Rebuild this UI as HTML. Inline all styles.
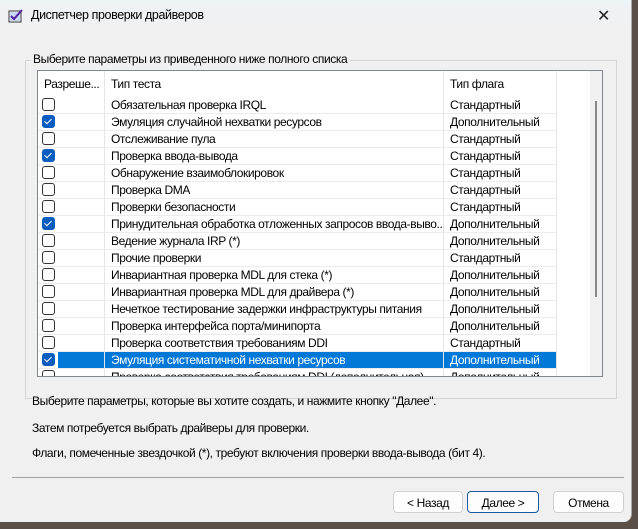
<!DOCTYPE html>
<html><head><meta charset="utf-8"><style>
body{margin:0;width:638px;height:529px;background:#5a5048;position:relative;overflow:hidden;font-family:"Liberation Sans",sans-serif;font-size:12px;letter-spacing:-0.4px;color:#000}
.win{position:absolute;left:0;top:0;width:631px;height:522px;background:#f0f0f0;border-radius:0 0 8px 0;border-right:1px solid #aaa}
.title{position:absolute;left:0;top:0;width:631px;height:32px;background:linear-gradient(#eef3f7,#f0f0f0)}
.title .tt{position:absolute;left:31px;top:8px;font-size:12.5px}
.title .close{position:absolute;left:597px;top:6px;font-size:16px;color:#222;letter-spacing:0}
.grp{position:absolute;left:25px;top:60px;width:590px;height:337px;border:1px solid #d5d5d5}
.grpl{position:absolute;left:31px;top:52px;background:#f0f0f0;padding:0 2px}
.list{position:absolute;left:37px;top:70px;width:564px;height:305px;border:1px solid #828790;background:#fff;overflow:hidden}
.hdr{position:absolute;top:0;height:26px;line-height:26px;padding-left:6px;border-right:1px solid #e5e5e5;box-sizing:border-box}
.row{position:absolute;left:0;width:519px;height:17px;border-bottom:1px solid #ececec;box-sizing:border-box}
.row div{position:absolute;top:0;height:16px;line-height:16px;border-right:1px solid #e5e5e5;box-sizing:border-box;white-space:nowrap;overflow:hidden}
.cb{position:absolute;left:4px;top:1px;width:13px;height:13px;border:1px solid #333;border-radius:3px;box-sizing:border-box;background:#fff}
.cb.on{background:#0a5cbf;border-color:#0a5cbf}
.cb.on:after{content:"";position:absolute;left:3px;top:1px;width:3px;height:6px;border:solid #fff;border-width:0 1px 1px 0;transform:rotate(45deg)}
.sel .t{background:#0078d7;color:#fff}
.sb{position:absolute;left:552px;top:0;width:12px;height:305px;background:#f0f0f0}
.thumb{position:absolute;left:5px;top:30px;width:2px;height:196px;background:#888}
.txt{position:absolute;left:32px}
.btn{position:absolute;top:491px;height:22px;border:1px solid #d0d0d0;border-radius:4px;background:#fdfdfd;text-align:center;line-height:22px;box-sizing:border-box}
</style></head><body>
<div class="win">
<div class="title">
<svg style="position:absolute;left:8px;top:9px" width="16" height="14" viewBox="0 0 16 14"><rect x="1" y="2" width="12" height="11" fill="#fff" stroke="#333"/><rect x="2" y="3" width="10" height="9" fill="#c9d8f0"/><path d="M3 7l3 3 8-9" stroke="#5020a0" stroke-width="2" fill="none"/></svg>
<span class="tt">Диспетчер проверки драйверов</span><span class="close">✕</span></div>
<div class="grp"></div>
<div class="grpl">Выберите параметры из приведенного ниже полного списка</div>
<div class="list">
<div class="hdr" style="left:0;width:67px">Разреше...</div>
<div class="hdr" style="left:67px;width:339px">Тип теста</div>
<div class="hdr" style="left:406px;width:113px">Тип флага</div>
<div class="hdr" style="left:519px;width:33px;border:0"></div>
<div id="rows"></div>
<div class="sb"><div class="thumb"></div></div>
</div>
<div class="txt" style="top:394px">Выберите параметры, которые вы хотите создать, и нажмите кнопку "Далее".</div>
<div class="txt" style="top:421px">Затем потребуется выбрать драйверы для проверки.</div>
<div class="txt" style="top:446px">Флаги, помеченные звездочкой (*), требуют включения проверки ввода-вывода (бит 4).</div>
<div style="position:absolute;left:12px;top:477px;width:612px;height:1px;background:#a0a0a0"></div>
<div class="btn" style="left:393px;width:70px">&lt; Назад</div>
<div class="btn" style="left:467px;width:72px;border-color:#1a5aa0">Далее &gt;</div>
<div class="btn" style="left:553px;width:71px">Отмена</div>
</div>
<script>
var d=[[0,"Обязательная проверка IRQL","Стандартный"],[1,"Эмуляция случайной нехватки ресурсов","Дополнительный"],[0,"Отслеживание пула","Стандартный"],[1,"Проверка ввода-вывода","Стандартный"],[0,"Обнаружение взаимоблокировок","Стандартный"],[0,"Проверка DMA","Стандартный"],[0,"Проверки безопасности","Стандартный"],[1,"Принудительная обработка отложенных запросов ввода-выво...","Дополнительный"],[0,"Ведение журнала IRP (*)","Дополнительный"],[0,"Прочие проверки","Стандартный"],[0,"Инвариантная проверка MDL для стека (*)","Дополнительный"],[0,"Инвариантная проверка MDL для драйвера (*)","Дополнительный"],[0,"Нечеткое тестирование задержки инфраструктуры питания","Дополнительный"],[0,"Проверка интерфейса порта/минипорта","Дополнительный"],[0,"Проверка соответствия требованиям DDI","Стандартный"],[1,"Эмуляция систематичной нехватки ресурсов","Дополнительный"],[0,"Проверка соответствия требованиям DDI (дополнительная)","Дополнительный"]];
var h="";d.forEach(function(r,i){h+='<div class="row'+(i==15?' sel':'')+'" style="top:'+(26+i*17)+'px"><div style="left:0;width:67px"><span class="cb'+(r[0]?' on':'')+'"></span>'+(i==15?'<div class="t" style="left:20px;width:47px;border:0"></div>':'')+'</div><div class="t" style="left:67px;width:339px;padding-left:6px">'+r[1]+'</div><div class="t" style="left:406px;width:113px;padding-left:6px">'+r[2]+'</div></div>'});
document.getElementById("rows").innerHTML=h;
</script>
</body></html>
